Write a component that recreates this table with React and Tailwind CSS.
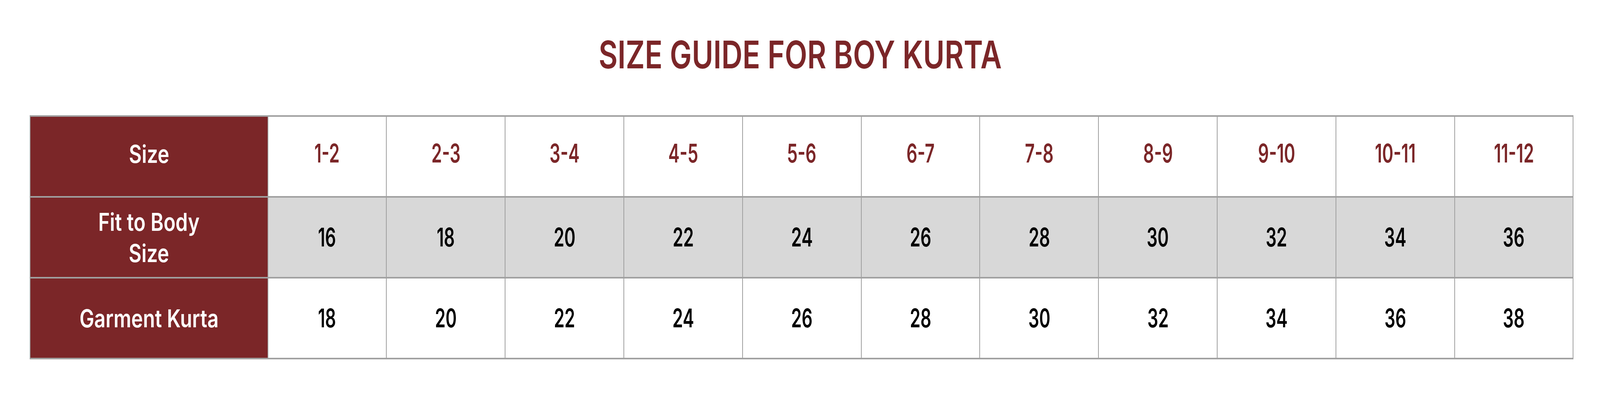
const sizes = ["1-2", "2-3", "3-4", "4-5", "5-6", "6-7", "7-8", "8-9", "9-10", "10-11", "11-12"];
const fitToBody = [16, 18, 20, 22, 24, 26, 28, 30, 32, 34, 36];
const garment = [18, 20, 22, 24, 26, 28, 30, 32, 34, 36, 38];

function LabelCell({ children, top }) {
  return (
    <div
      className={
        "flex h-[207px] items-center justify-center border-r-[2px] border-b-[4px] border-[#a0a0a0] bg-[#7b2628] text-center text-[63px] font-semibold leading-[80px] text-white " +
        (top ? "pb-[14px]" : "")
      }
    >
      <div className="scale-x-[0.8]">{children}</div>
    </div>
  );
}

function ValueCell({ children, shaded, accent }) {
  return (
    <div
      className={
        "flex h-[207px] items-center justify-center border-r-[2px] border-b-[4px] border-[#a0a0a0] text-[66px] font-semibold " +
        (shaded ? "bg-[#d8d8d8] " : "bg-white ") +
        (accent ? "pb-[16px] text-[#7b2628]" : "text-black")
      }
    >
      <span className="inline-block scale-x-[0.66]">{children}</span>
    </div>
  );
}

export default function App() {
  return (
    <div className="h-[1042px] w-full bg-white" style={{ fontFamily: "Inter, 'Noto Sans', sans-serif" }}>
      <h1 className="pt-[91px] text-center text-[98px] font-semibold leading-none text-[#7b2628]">
        <span className="inline-block scale-x-[0.764]">SIZE GUIDE FOR BOY KURTA</span>
      </h1>
      <div className="pr-[1.65%] pl-[1.85%] pt-[106px]">
        <div className="grid grid-cols-[15.41%_repeat(11,1fr)] border-t-[4px] border-l-[2px] border-[#a0a0a0]">
          <LabelCell top>Size</LabelCell>
          {sizes.map((s) => (
            <ValueCell key={s} accent>
              {s}
            </ValueCell>
          ))}
          <LabelCell>
            Fit to Body
            <br />
            Size
          </LabelCell>
          {fitToBody.map((v, i) => (
            <ValueCell key={i} shaded>
              {v}
            </ValueCell>
          ))}
          <LabelCell>Garment Kurta</LabelCell>
          {garment.map((v, i) => (
            <ValueCell key={i}>{v}</ValueCell>
          ))}
        </div>
      </div>
    </div>
  );
}
